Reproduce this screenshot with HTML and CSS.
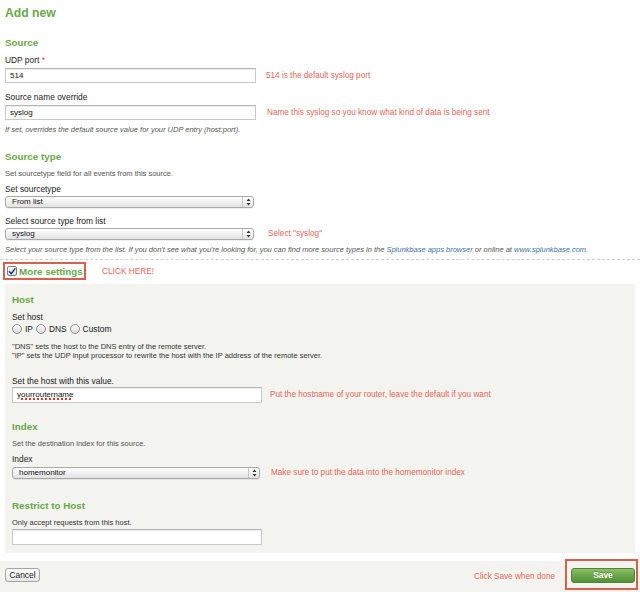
FILE: index.html
```html
<!DOCTYPE html>
<html>
<head>
<meta charset="utf-8">
<title>Add new</title>
<link rel="stylesheet" href="styles.css">
</head>
<body>
<div class="page">
  <h1 class="title">Add new</h1>

  <h2 class="heading h-source">Source</h2>
  <div class="label mt6">UDP port <span class="req">*</span></div>
  <div class="row mt3">
    <div class="input w251">514</div>
    <span class="note n1">514 is the default syslog port</span>
  </div>
  <div class="label mt9">Source name override</div>
  <div class="row mt3">
    <div class="input w251">syslog</div>
    <span class="note n2">Name this syslog so you know what kind of data is being sent</span>
  </div>
  <p class="help italic mt5">If set, overrides the default source value for your UDP entry (host:port).</p>

  <h2 class="heading mt17">Source type</h2>
  <p class="help mt6">Set sourcetype field for all events from this source.</p>
  <div class="label mt6">Set sourcetype</div>
  <div class="select w249 mt2"><span class="sel-text">From list</span><span class="sel-arrows"><svg width="5" height="8" viewBox="0 0 5 8"><path d="M2.5 0.5L4.5 3H0.5Z M2.5 7.5L4.5 5H0.5Z" fill="#333"/></svg></span></div>
  <div class="label mt8">Select source type from list</div>
  <div class="row row-sel mt2">
    <div class="select w249"><span class="sel-text">syslog</span><span class="sel-arrows"><svg width="5" height="8" viewBox="0 0 5 8"><path d="M2.5 0.5L4.5 3H0.5Z M2.5 7.5L4.5 5H0.5Z" fill="#333"/></svg></span></div>
    <span class="note n3">Select "syslog"</span>
  </div>
  <p class="help italic mt5">Select your source type from the list. If you don't see what you're looking for, you can find more source types in the <a class="link">Splunkbase apps browser</a> or online at <a class="link">www.splunkbase.com</a>.</p>
</div>

<div class="divider"></div>

<div class="page">
  <div class="more-row">
    <div class="more-box">
      <span class="checkbox"><svg width="9" height="9" viewBox="0 0 9 9"><path d="M1.6 4.6L3.6 7L7.8 1.4" fill="none" stroke="#1d3f8a" stroke-width="1.6" stroke-linecap="round" stroke-linejoin="round"/></svg></span>
      <span class="more-text">More settings</span>
    </div>
    <span class="note click">CLICK HERE!</span>
  </div>

  <div class="panel">
    <h2 class="heading">Host</h2>
    <div class="label mt6">Set host</div>
    <div class="radios mt2">
      <span class="radio"></span><span class="radio-label">IP</span>
      <span class="radio"></span><span class="radio-label">DNS</span>
      <span class="radio"></span><span class="radio-label">Custom</span>
    </div>
    <p class="help dark mt8">"DNS" sets the host to the DNS entry of the remote server.<br>"IP" sets the UDP input processor to rewrite the host with the IP address of the remote server.</p>
    <div class="label mt16">Set the host with this value.</div>
    <div class="row mt1">
      <div class="input w250 tall"><span class="misspelt">yourroutername</span></div>
      <span class="note n4">Put the hostname of your router, leave the default if you want</span>
    </div>

    <h2 class="heading mt18">Index</h2>
    <p class="help mt6">Set the destination index for this source.</p>
    <div class="label mt6">Index</div>
    <div class="row row-sel mt3">
      <div class="select w248"><span class="sel-text">homemonitor</span><span class="sel-arrows"><svg width="5" height="8" viewBox="0 0 5 8"><path d="M2.5 0.5L4.5 3H0.5Z M2.5 7.5L4.5 5H0.5Z" fill="#333"/></svg></span></div>
      <span class="note n5">Make sure to put the data into the homemonitor index</span>
    </div>

    <h2 class="heading mt21">Restrict to Host</h2>
    <p class="help dark mt6">Only accept requests from this host.</p>
    <div class="input w250 tall mt2"></div>
  </div>
</div>

<div class="footer">
  <button class="btn-cancel">Cancel</button>
  <span class="note save-note">Click Save when done</span>
  <div class="save-box"><button class="btn-save">Save</button></div>
</div>
</body>
</html>
```

FILE: styles.css
```css
html, body {
  margin: 0;
  padding: 0;
  background: #ffffff;
}

body {
  width: 640px;
  height: 592px;
  overflow: hidden;
  font-family: "Liberation Sans", Arial, sans-serif;
  color: #333333;
}

.page {
  padding-left: 5px;
}

.title {
  margin: 6px 0 0;
  font-size: 12.2px;
  line-height: 14px;
  font-weight: bold;
  color: #6aa84a;
}

.heading {
  margin: 0;
  font-size: 9.8px;
  line-height: 12px;
  font-weight: bold;
  color: #6aa84a;
}

.h-source { margin-top: 17px; }

.label {
  font-size: 8.4px;
  line-height: 10px;
  color: #222222;
}

.req { color: #d0403a; }

.help {
  margin: 0;
  font-size: 7.5px;
  line-height: 9px;
  color: #555555;
}

.help.dark { color: #333333; }
.italic { font-style: italic; }

.link { color: #3a72a6; }

.mt1 { margin-top: 1px; }
.mt2 { margin-top: 2px; }
.mt3 { margin-top: 3px; }
.mt5 { margin-top: 5px; }
.mt6 { margin-top: 6px; }
.mt8 { margin-top: 8px; }
.mt9 { margin-top: 9px; }
.mt16 { margin-top: 16px; }
.mt17 { margin-top: 17px; }
.mt18 { margin-top: 18px; }
.mt21 { margin-top: 21px; }

.row {
  display: flex;
  align-items: center;
}

.input {
  box-sizing: border-box;
  height: 15px;
  background: #ffffff;
  border: 1px solid #c9c9c9;
  border-top-color: #b5b5b5;
  box-shadow: inset 0 1px 1px rgba(0, 0, 0, 0.08);
  padding-left: 4px;
  font-size: 8px;
  line-height: 13px;
  color: #111111;
}

.input.tall {
  height: 16px;
  line-height: 14px;
}

.w251 { width: 251px; }
.w250 { width: 250px; }
.w249 { width: 249px; }
.w248 { width: 248px; }

.misspelt {
  text-decoration: underline dotted #e0332a;
  text-decoration-thickness: 1.5px;
  text-underline-offset: 1px;
}

.select {
  box-sizing: border-box;
  height: 12px;
  display: flex;
  align-items: stretch;
  border: 1px solid #a9a9a9;
  border-radius: 3px;
  background: linear-gradient(#ffffff, #f0f0f0 50%, #e2e2e2);
  box-shadow: 0 1px 0 rgba(0, 0, 0, 0.06);
  font-size: 8px;
  line-height: 10px;
  color: #111111;
}

.sel-text {
  flex: 1;
  padding-left: 6px;
}

.sel-arrows {
  width: 10px;
  border-left: 1px solid #c4c4c4;
  display: flex;
  align-items: center;
  justify-content: center;
}

.note {
  font-size: 8.2px;
  line-height: 10px;
  color: #e2665a;
}

.n1 { margin-left: 10px; }
.n2 { margin-left: 11px; }
.n3 { margin-left: 14px; }
.n4 { margin-left: 8px; }
.n5 { margin-left: 11px; }

.divider {
  margin-top: 5px;
  border-top: 1px dashed #cfcfcf;
}

.more-row {
  display: flex;
  align-items: center;
  margin-top: 2px;
  margin-left: -2px;
}

.more-box {
  box-sizing: border-box;
  width: 83px;
  height: 18px;
  border: 2px solid #d9604f;
  display: flex;
  align-items: center;
  padding-left: 2px;
}

.checkbox {
  box-sizing: border-box;
  width: 10px;
  height: 10px;
  border: 1px solid #7d7d7d;
  border-radius: 2px;
  background: linear-gradient(#ffffff, #dcdcdc);
  display: flex;
  align-items: center;
  justify-content: center;
}

.more-text {
  margin-left: 2px;
  font-size: 9.8px;
  font-weight: bold;
  color: #6aa84a;
}

.click {
  margin-left: 16px;
  font-size: 8.3px;
}

.panel {
  margin-top: 4px;
  width: 630px;
  box-sizing: border-box;
  padding: 10px 0 8px 7px;
  background: #f3f3ef;
}

.radios {
  display: flex;
  align-items: center;
  height: 10px;
  font-size: 8.4px;
  color: #222222;
}

.radio {
  box-sizing: border-box;
  width: 10px;
  height: 10px;
  border: 1px solid #8f8f8f;
  border-radius: 50%;
  background: linear-gradient(#ffffff, #d8d8d8);
}

.radio-label {
  margin-left: 3px;
  margin-right: 3px;
}

.footer {
  margin-top: 8px;
  height: 31px;
  background: #f3f3ef;
  display: flex;
  align-items: flex-start;
  padding-right: 2px;
}

.btn-cancel {
  margin: 7px 0 0 5px;
  box-sizing: border-box;
  width: 35px;
  height: 14px;
  padding: 0;
  border: 1px solid #a5a5a5;
  border-radius: 3px;
  background: linear-gradient(#ffffff, #e6e6e6);
  font-family: "Liberation Sans", Arial, sans-serif;
  font-size: 8.4px;
  line-height: 12px;
  color: #222222;
}

.save-note {
  margin-left: auto;
  margin-top: 11px;
}

.save-box {
  margin-left: 10px;
  margin-top: -2px;
  box-sizing: border-box;
  width: 73px;
  height: 31px;
  border: 2px solid #d9604f;
  padding: 7px 2px 0 4px;
}

.btn-save {
  display: block;
  box-sizing: border-box;
  width: 64px;
  height: 15px;
  padding: 0;
  border: 1px solid #4f8535;
  border-radius: 3px;
  background: linear-gradient(#8dc06a, #6aa64b 50%, #558f39);
  font-family: "Liberation Sans", Arial, sans-serif;
  font-size: 8.4px;
  font-weight: bold;
  line-height: 13px;
  color: #ffffff;
  text-shadow: 0 -1px 0 rgba(0, 0, 0, 0.25);
}
```
